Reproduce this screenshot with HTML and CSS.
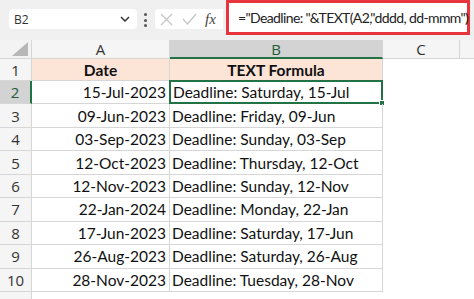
FILE: index.html
```html
<!DOCTYPE html>
<html>
<head>
<meta charset="utf-8">
<link rel="stylesheet" href="styles.css">
</head>
<body>
<div class="app">
  <div class="toolbar">
    <div class="namebox">
      <span class="ref">B2</span>
      <svg class="chev" width="10" height="6" viewBox="0 0 10 6"><path d="M1 1 L5 5 L9 1" fill="none" stroke="#333" stroke-width="1.5"/></svg>
    </div>
    <div class="dots"><span></span><span></span><span></span></div>
    <div class="fxbox">
      <svg width="13" height="13" viewBox="0 0 13 13"><path d="M1 1 L12 12 M12 1 L1 12" stroke="#c6c6c6" stroke-width="1.3"/></svg>
      <svg width="15" height="12" viewBox="0 0 15 12"><path d="M1 6 L5.5 11 L14 1" fill="none" stroke="#c6c6c6" stroke-width="1.3"/></svg>
      <span class="fx">fx</span>
    </div>
    <div class="formula">="Deadline: "&amp;TEXT(A2,"dddd, dd-mmm")</div>
  </div>
  <div class="sheet">
    <div class="corner"><span class="tri"></span></div>
    <div class="colh">A</div>
    <div class="colh sel">B</div>
    <div class="colh">C</div>
    <div class="colh last"></div>

    <div class="rowh">1</div>
    <div class="cell head">Date</div>
    <div class="cell head">TEXT Formula</div>
    <div class="blank"></div><div class="blank"></div>

    <div class="rowh sel">2</div>
    <div class="cell num">15-Jul-2023</div>
    <div class="cell txt active">Deadline: Saturday, 15-Jul<span class="handle"></span></div>
    <div class="blank"></div><div class="blank"></div>

    <div class="rowh">3</div>
    <div class="cell num">09-Jun-2023</div>
    <div class="cell txt">Deadline: Friday, 09-Jun</div>
    <div class="blank"></div><div class="blank"></div>

    <div class="rowh">4</div>
    <div class="cell num">03-Sep-2023</div>
    <div class="cell txt">Deadline: Sunday, 03-Sep</div>
    <div class="blank"></div><div class="blank"></div>

    <div class="rowh">5</div>
    <div class="cell num">12-Oct-2023</div>
    <div class="cell txt">Deadline: Thursday, 12-Oct</div>
    <div class="blank"></div><div class="blank"></div>

    <div class="rowh">6</div>
    <div class="cell num">12-Nov-2023</div>
    <div class="cell txt">Deadline: Sunday, 12-Nov</div>
    <div class="blank"></div><div class="blank"></div>

    <div class="rowh">7</div>
    <div class="cell num">22-Jan-2024</div>
    <div class="cell txt">Deadline: Monday, 22-Jan</div>
    <div class="blank"></div><div class="blank"></div>

    <div class="rowh">8</div>
    <div class="cell num">17-Jun-2023</div>
    <div class="cell txt">Deadline: Saturday, 17-Jun</div>
    <div class="blank"></div><div class="blank"></div>

    <div class="rowh">9</div>
    <div class="cell num">26-Aug-2023</div>
    <div class="cell txt">Deadline: Saturday, 26-Aug</div>
    <div class="blank"></div><div class="blank"></div>

    <div class="rowh">10</div>
    <div class="cell num">28-Nov-2023</div>
    <div class="cell txt">Deadline: Tuesday, 28-Nov</div>
    <div class="blank"></div><div class="blank"></div>

    <div class="rowh"></div>
    <div class="blank"></div><div class="blank"></div><div class="blank"></div><div class="blank"></div>
  </div>
</div>
</body>
</html>
```

FILE: styles.css
```css
* { box-sizing: border-box; }
html, body { margin: 0; padding: 0; background: #ffffff; }
.app { width: 474px; height: 299px; overflow: hidden; }

.toolbar {
  height: 40px;
  background: #f0f0f0;
  display: flex;
  align-items: flex-start;
  position: relative;
}
.namebox {
  margin: 9px 0 0 9px;
  width: 128px; height: 20px;
  background: #fff;
  border-radius: 4px;
  display: flex; align-items: center; justify-content: space-between;
  padding: 0 7px 0 5px;
  font-family: "Open Sans", sans-serif; font-size: 12px; color: #333;
}
.dots {
  margin: 13px 0 0 7px;
  width: 3px; height: 14px;
  display: flex; flex-direction: column; justify-content: space-between;
}
.dots span { width: 3px; height: 3px; background: #555; border-radius: 50%; }
.fxbox {
  margin: 9px 0 0 8px;
  width: 68px; height: 20px;
  background: #fff;
  border-radius: 4px 0 0 4px;
  display: flex; align-items: center; gap: 9px;
  padding-left: 5px;
}
.fx {
  font-family: "Liberation Serif", serif; font-style: italic; font-size: 15px; color: #444;
  margin-left: -1px;
}
.formula {
  margin-left: 3px;
  width: 244px; height: 35px;
  border: 3px solid #e8343c;
  background: #fff;
  padding: 6px 0 0 9px;
  font-family: Lato, sans-serif; font-size: 14px; color: #222;
  letter-spacing: -0.62px;
  white-space: nowrap;
}

.sheet {
  display: grid;
  grid-template-columns: 32px 138px 213px 77px 14px;
  grid-template-rows: 19px 22px repeat(9, 23.44px) 10px;
  font-family: Lato, sans-serif;
}
.corner {
  background: #f3f3f3;
  border-right: 1px solid #d6d6d6;
  border-bottom: 1px solid #d6d6d6;
  position: relative;
}
.tri {
  position: absolute; right: 3px; bottom: 2px;
  width: 0; height: 0;
  border-left: 16px solid transparent;
  border-bottom: 14px solid #b7b7b7;
}
.colh {
  background: #f5f5f5;
  border-right: 1px solid #d6d6d6;
  border-bottom: 1px solid #d6d6d6;
  display: flex; align-items: center; justify-content: center;
  font-family: "Open Sans", sans-serif; font-size: 15px; color: #333;
}
.colh.sel { background: #d3d3d3; border-bottom: 2px solid #217346; color: #1d5a37; }
.colh.last { border-right: none; }
.rowh {
  background: #f5f5f5;
  border-right: 1px solid #d6d6d6;
  border-bottom: 1px solid #d6d6d6;
  display: flex; align-items: center; justify-content: center;
  font-family: "Open Sans", sans-serif; font-size: 15px; color: #333;
}
.rowh.sel { background: #d3d3d3; border-right: 2px solid #217346; color: #1d5a37; }
.cell {
  border-right: 1px solid #d6d6d6;
  border-bottom: 1px solid #d6d6d6;
  display: flex; align-items: center;
  font-size: 15.5px; color: #111;
  white-space: nowrap;
  position: relative;
}
.cell.head { background: #fce4d6; justify-content: center; font-weight: 700; }
.cell.num { justify-content: flex-end; padding-right: 3px; }
.cell.txt { padding-left: 2px; }
.cell.active { border: 2px solid #217346; margin: -1px 0 0 -1px; }
.handle {
  position: absolute; right: -4px; bottom: -4px;
  width: 6px; height: 6px; background: #217346; border: 1px solid #fff;
}
.blank { background: #fff; }
```
